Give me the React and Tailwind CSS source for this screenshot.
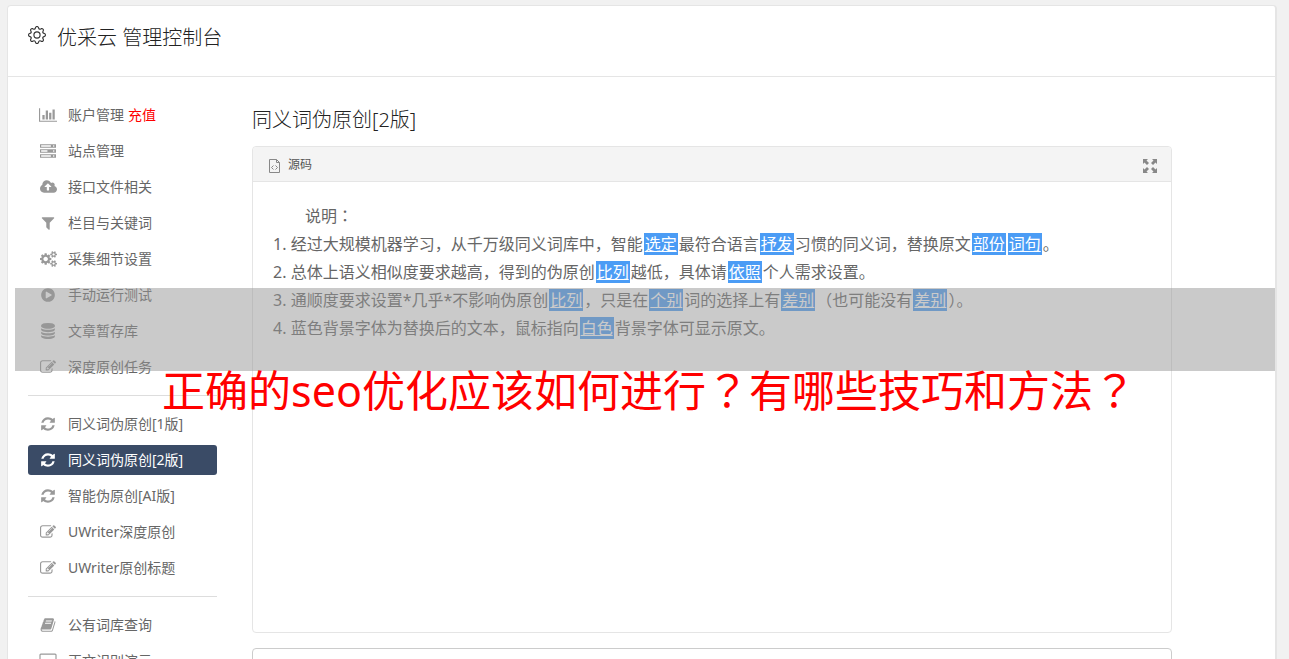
import { BsGear } from 'react-icons/bs';

const icons = {
  chart: {
    box: '0 0 2048 1792',
    width: 18,
    path: 'M640 896v512h-256v-512h256zm384-512v1024h-256v-1024h256zm1024 1152v128h-2048v-1536h128v1408h1920zm-640-896v768h-256v-768h256zm384-384v1152h-256v-1152h256z',
  },
  server: {
    box: '0 0 1792 1792',
    width: 16,
    path: 'M0 128h1792v416h-1792zM128 256v160h1088v-160zM1472 256v160h128v-160zM0 688h1792v416h-1792zM128 816v160h704v-160zM1472 816v160h128v-160zM0 1248h1792v416h-1792zM128 1376v160h1088v-160zM1472 1376v160h128v-160z',
  },
  upload: {
    box: '0 0 1920 1792',
    width: 17,
    path: 'M1280 864q0-14-9-23l-352-352q-9-9-23-9t-23 9l-351 351q-10 12-10 24 0 14 9 23t23 9h224v352q0 13 9.500 22.500t22.500 9.500h192q13 0 22.500-9.500t9.500-22.500v-352h224q13 0 22.500-9.500t9.500-22.500zm640 288q0 159-112.500 271.500t-271.500 112.500h-1088q-185 0-316.500-131.500t-131.500-316.500q0-130 70-240t188-165q-2-30-2-43 0-212 150-362t362-150q156 0 285.500 87t188.500 231q71-62 166-62 106 0 181 75t75 181q0 76-41 138 130 31 213.500 135.500t83.500 238.500z',
  },
  filter: {
    box: '0 0 1792 1792',
    width: 16,
    path: 'M1595 295q17 41-14 70l-493 493v742q0 42-39 59-13 5-25 5-27 0-45-19l-256-256q-19-19-19-45v-486l-493-493q-31-29-14-70 17-39 59-39h1280q42 0 59 39z',
  },
  cogs: {
    box: '0 0 1920 1792',
    width: 17,
    path: 'M896 896q0-106-75-181t-181-75-181 75-75 181 75 181 181 75 181-75 75-181zm768 512q0-52-38-90t-90-38-90 38-38 90q0 53 37.500 90.500t90.500 37.500 90.500-37.500 37.500-90.500zm0-1024q0-52-38-90t-90-38-90 38-38 90q0 53 37.500 90.500t90.500 37.500 90.500-37.500 37.500-90.500zm-384 421v185q0 10-7 19.500t-16 10.500l-155 24q-11 35-32 76 34 48 90 115 7 11 7 20 0 12-7 19-23 30-82.500 89.500t-78.500 59.500q-11 0-21-7l-115-90q-37 19-77 31-11 108-23 155-7 24-30 24h-186q-11 0-20-7.500t-10-17.500l-23-153q-34-10-75-31l-118 89q-7 7-20 7-11 0-21-8-144-133-144-160 0-9 7-19 10-14 41-53t47-61q-23-44-35-82l-152-24q-10-1-17-9.500t-7-19.500v-185q0-10 7-19.500t16-10.500l155-24q11-35 32-76-34-48-90-115-7-11-7-20 0-12 7-20 22-30 82-89t79-59q11 0 21 7l115 90q34-18 77-32 11-108 23-154 7-24 30-24h186q11 0 20 7.500t10 17.500l23 153q34 10 75 31l118-89q8-7 20-7 11 0 21 8 144 133 144 160 0 8-7 19-12 16-42 54t-45 60q23 48 34 82l152 23q10 2 17 10.500t7 19.500zm640 533v140q0 16-149 31-12 27-30 52 51 113 51 138 0 4-4 7-122 71-124 71-8 0-46-47t-52-68q-20 2-30 2t-30-2q-14 21-52 68t-46 47q-2 0-124-71-4-3-4-7 0-25 51-138-18-25-30-52-149-15-149-31v-140q0-16 149-31 13-29 30-52-51-113-51-138 0-4 4-7 4-2 35-20t59-34 30-16q8 0 46 46.500t52 67.500q20-2 30-2t30 2q51-71 92-112l6-2q4 0 124 70 4 3 4 7 0 25-51 138 17 23 30 52 149 15 149 31zm0-1024v140q0 16-149 31-12 27-30 52 51 113 51 138 0 4-4 7-122 71-124 71-8 0-46-47t-52-68q-20 2-30 2t-30-2q-14 21-52 68t-46 47q-2 0-124-71-4-3-4-7 0-25 51-138-18-25-30-52-149-15-149-31v-140q0-16 149-31 13-29 30-52-51-113-51-138 0-4 4-7 4-2 35-20t59-34 30-16q8 0 46 46.500t52 67.500q20-2 30-2t30 2q51-71 92-112l6-2q4 0 124 70 4 3 4 7 0 25-51 138 17 23 30 52 149 15 149 31z',
  },
  play: {
    box: '0 0 1792 1792',
    width: 16,
    path: 'M896 128q209 0 385.500 103t279.500 279.500 103 385.500-103 385.500-279.500 279.500-385.500 103-385.500-103-279.500-279.500-103-385.500 103-385.500 279.500-279.500 385.500-103zm384 823q32-18 32-55t-32-55l-544-320q-31-19-64-1-32 19-32 56v640q0 37 32 56 16 8 32 8 17 0 32-9z',
  },
  database: {
    box: '0 0 1792 1792',
    width: 16,
    path: 'M896 768q237 0 443-43t325-127v170q0 69-103 128t-280 93.500-385 34.500-385-34.500-280-93.500-103-128v-170q119 84 325 127t443 43zm0 768q237 0 443-43t325-127v170q0 69-103 128t-280 93.500-385 34.500-385-34.500-280-93.500-103-128v-170q119 84 325 127t443 43zm0-384q237 0 443-43t325-127v170q0 69-103 128t-280 93.500-385 34.500-385-34.500-280-93.500-103-128v-170q119 84 325 127t443 43zm0-1152q208 0 385 34.500t280 93.500 103 128v128q0 69-103 128t-280 93.500-385 34.500-385-34.500-280-93.500-103-128v-128q0-69 103-128t280-93.500 385-34.500z',
  },
  edit: {
    box: '0 0 1792 1792',
    width: 16,
    path: 'M888 1184l116-116-152-152-116 116v56h96v96h56zm440-720q-16-16-33 1l-350 350q-17 17-1 33t33-1l350-350q17-17 1-33zm80 594v190q0 119-84.500 203.500t-203.500 84.500h-832q-119 0-203.500-84.500t-84.500-203.500v-832q0-119 84.500-203.500t203.500-84.500h832q63 0 117 25 15 7 18 23 3 17-9 29l-49 49q-14 14-32 8-23-6-45-6h-832q-66 0-113 47t-47 113v832q0 66 47 113t113 47h832q66 0 113-47t47-113v-126q0-13 9-22l64-64q15-15 35-7t20 29zm-96-738l288 288-672 672h-288v-288zm444 132l-92 92-288-288 92-92q28-28 68-28t68 28l152 152q28 28 28 68t-28 68z',
  },
  refresh: {
    box: '0 0 1792 1792',
    width: 16,
    path: 'M1639 1056q0 5-1 7-64 268-268 434.500t-478 166.500q-146 0-282.500-55t-243.500-157l-129 129q-19 19-45 19t-45-19-19-45v-448q0-26 19-45t45-19h448q26 0 45 19t19 45-19 45l-137 137q71 66 161 102t187 36q134 0 250-65t186-179q11-17 53-117 8-23 30-23h192q13 0 22.500 9.500t9.500 22.500zm25-800v448q0 26-19 45t-45 19h-448q-26 0-45-19t-19-45 19-45l138-138q-148-137-349-137-134 0-250 65t-186 179q-11 17-53 117-8 23-30 23h-199q-13 0-22.500-9.500t-9.500-22.500v-7q65-268 270-434.500t480-166.500q146 0 284 55.500t245 156.500l130-129q19-19 45-19t45 19 19 45z',
  },
  book: {
    box: '0 0 1792 1792',
    width: 16,
    path: 'M1703 478q40 57 18 129l-275 906q-19 64-76.500 107.500t-122.500 43.500h-923q-77 0-148.500-53.500t-99.500-131.500q-24-67-2-127 0-4 3-27t4-37q1-8-3-21.500t-3-19.500q2-11 8-21t16.500-23.500 16.500-23.500q23-38 45-91.500t30-91.500q3-10 .5-30t-.5-28q3-11 17-28t17-23q21-36 42-92t25-90q1-9-2.500-32t.5-28q4-13 22-30.500t22-22.500q19-26 42.500-84.500t27.500-96.500q1-8-3-25.500t-2-26.500q2-8 9-18t18-23 17-21q8-12 16.500-30.500t15-35 16-36 19.500-32 26.500-23.500 36-11.500 47.500 5.500l-1 3q38-9 51-9h761q74 0 114 56t18 130l-274 906q-36 119-71.500 153.500t-128.500 34.500h-869q-27 0-38 15-11 16-1 43 24 70 144 70h923q29 0 56-15.500t35-41.500l300-987q7-22 5-57 38 15 59 43zm-1064 2q-4 13 2 22.500t20 9.500h608q13 0 25.500-9.500t16.500-22.500l21-64q4-13-2-22.500t-20-9.500h-608q-13 0-25.500 9.500t-16.500 22.500zm-83 256q-4 13 2 22.500t20 9.500h608q13 0 25.500-9.500t16.500-22.500l21-64q4-13-2-22.500t-20-9.500h-608q-13 0-25.500 9.500t-16.500 22.500z',
  },
  screen: {
    box: '0 0 1920 1792',
    width: 18,
    path: 'M160 64h1600q66 0 113 47t47 113v1152q0 66-47 113t-113 47h-1600q-66 0-113-47t-47-113v-1152q0-66 47-113t113-47zM160 192q-32 0-32 32v1152q0 32 32 32h1600q32 0 32-32v-1152q0-32-32-32z',
  },
};

const menuGroups = [
  [
    { icon: 'chart', label: '账户管理', extra: '充值' },
    { icon: 'server', label: '站点管理' },
    { icon: 'upload', label: '接口文件相关' },
    { icon: 'filter', label: '栏目与关键词' },
    { icon: 'cogs', label: '采集细节设置' },
    { icon: 'play', label: '手动运行测试' },
    { icon: 'database', label: '文章暂存库' },
    { icon: 'edit', label: '深度原创任务' },
  ],
  [
    { icon: 'refresh', label: '同义词伪原创[1版]' },
    { icon: 'refresh', label: '同义词伪原创[2版]', active: true },
    { icon: 'refresh', label: '智能伪原创[AI版]' },
    { icon: 'edit', label: 'UWriter深度原创' },
    { icon: 'edit', label: 'UWriter原创标题' },
  ],
  [
    { icon: 'book', label: '公有词库查询' },
    { icon: 'screen', label: '正文识别演示' },
  ],
];

// Objects are replaced words, strings are plain text
const lines = [
  ['经过大规模机器学习，从千万级同义词库中，智能', { word: '选定' }, '最符合语言', { word: '抒发' }, '习惯的同义词，替换原文', { word: '部份' }, { word: '词句' }, '。'],
  ['总体上语义相似度要求越高，得到的伪原创', { word: '比列' }, '越低，具体请', { word: '依照' }, '个人需求设置。'],
  ['通顺度要求设置*几乎*不影响伪原创', { word: '比列' }, '，只是在', { word: '个别' }, '词的选择上有', { word: '差别' }, '（也可能没有', { word: '差别' }, '）。'],
  ['蓝色背景字体为替换后的文本，鼠标指向', { word: '白色' }, '背景字体可显示原文。'],
];

const MenuIcon = ({ name }) => {
  const icon = icons[name];
  return (
    <svg viewBox={icon.box} width={icon.width} height="16" fill="currentColor" fillRule="evenodd" aria-hidden="true">
      <path d={icon.path} />
    </svg>
  );
};

const Sidebar = () => (
  <nav className="w-[189px] shrink-0">
    {menuGroups.map((group, index) => (
      <div key={index}>
        {index > 0 && <hr className="my-[13px] border-[#dddddd]" />}
        <ul className="flex flex-col gap-1.5">
          {group.map((item) => (
            <li key={item.label}>
              <a
                href="#"
                className={`flex h-[30px] items-center rounded-[3px] pl-2.5 text-sm ${
                  item.active ? 'bg-[#3a4b66] text-white' : 'text-[#666666]'
                }`}
              >
                <span className={`mr-2.5 flex w-5 justify-center ${item.active ? 'text-white' : 'text-[#999999]'}`}>
                  <MenuIcon name={item.icon} />
                </span>
                {item.label}
                {item.extra && <span className="ml-1 text-[#ff0000]">{item.extra}</span>}
              </a>
            </li>
          ))}
        </ul>
      </div>
    ))}
  </nav>
);

const Editor = () => (
  <section className="rounded border border-[#e5e5e5]">
    <div className="flex h-[35px] items-center justify-between rounded-t border-b border-[#e5e5e5] bg-[#f4f4f4] pr-3.5 pl-4">
      <button type="button" className="flex items-center gap-2 pt-0.5 text-xs text-[#555555]">
        <svg viewBox="0 0 11 14" className="mt-0.5 h-3.5 w-[11px]" fill="none" stroke="#888888" aria-hidden="true">
          <path d="M.5.5h7l3 3v10h-10zM7.500.5v3h3" />
          <path d="M4.500 6.500l-2 2 2 2M6.500 6.500l2 2-2 2" />
        </svg>
        源码
      </button>
      <button type="button" aria-label="全屏" className="mt-1">
        <svg viewBox="0 0 14 14" className="h-3.5 w-3.5" fill="#888888" aria-hidden="true">
          <path d="M0 0h5L3.500 1.500 6 4 4 6 1.500 3.500 0 5zM14 0v5l-1.500-1.500L10 6 8 4l2.500-2.500L9 0zM0 14V9l1.500 1.500L4 8l2 2-2.500 2.500L5 14zM14 14H9l1.500-1.500L8 10l2-2 2.500 2.500L14 9z" />
        </svg>
      </button>
    </div>
    <div className="min-h-[450px] px-5 pt-[19px] text-base leading-7 text-[#666666]">
      <p className="indent-8">
        说明<span className="font-['Noto_Sans_CJK_JP',sans-serif]">：</span>
      </p>
      <ol>
        {lines.map((parts, index) => (
          <li key={index}>
            {index + 1}.{' '}
            {parts.map((part, i) =>
              part.word ? (
                <span key={i} className="mx-px bg-[#4b9cf5] px-px text-white underline">
                  {part.word}
                </span>
              ) : (
                part
              )
            )}
          </li>
        ))}
      </ol>
    </div>
  </section>
);

const Banner = () => (
  <div className="pointer-events-none absolute inset-x-[15px] top-[288px] -mr-px text-center">
    <div className="h-[83px] bg-[#969696]/50" />
    <p className="-mt-[13px] pl-2 text-[43px] leading-[60px] whitespace-nowrap text-[#ff0000]">
      正确的seo优化应该如何进行<span className="font-['Noto_Sans_CJK_JP',sans-serif]">？</span>
      有哪些技巧和方法<span className="font-['Noto_Sans_CJK_JP',sans-serif]">？</span>
    </p>
  </div>
);

const App = () => {
  return (
    <div className="h-screen overflow-hidden bg-[#f1f1f1] pt-[5px] pr-3 pl-[7px] font-['Noto_Sans','Noto_Sans_CJK_SC',sans-serif]">
      <div className="rounded-t border border-r-2 border-[#e5e5e5] bg-white">
        <header className="flex h-[71px] items-start gap-[11px] border-b border-[#e5e5e5] px-5 pt-[18px] text-[#333333]">
          <BsGear className="mt-0.5 h-[18px] w-[18px]" strokeWidth="0" />
          <h1 className="text-xl leading-7 font-light text-[#222222]">优采云 管理控制台</h1>
        </header>
        <div className="flex gap-[35px] pt-[23px] pr-[103px] pl-5">
          <Sidebar />
          <main className="min-w-0 flex-1">
            <h2 className="mt-1.5 mb-3 text-xl leading-7 font-light text-[#222222]">同义词伪原创[2版]</h2>
            <Editor />
            <textarea aria-label="原文" className="mt-[15px] block h-40 w-full resize-none rounded border border-[#cccccc] bg-white" />
          </main>
        </div>
      </div>
      <Banner />
    </div>
  );
};

export default App;
